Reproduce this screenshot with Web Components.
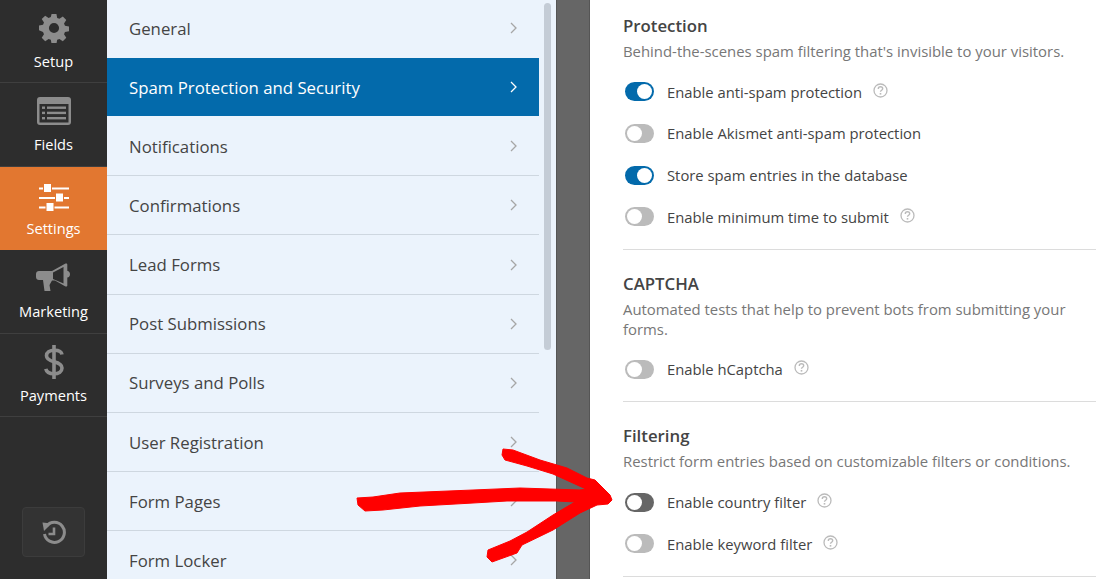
<!DOCTYPE html>
<html>
<head>
<meta charset="utf-8">
<style>
html, body { margin: 0; height: 100%; overflow: hidden; background: #fff; }
body { font-family: "Open Sans", "Noto Sans", sans-serif; }
</style>
</head>
<body>
<builder-app>
  <side-bar slot="side">
    <side-item label="Setup" icon="setup"></side-item>
    <side-item label="Fields" icon="fields"></side-item>
    <side-item label="Settings" icon="settings" active></side-item>
    <side-item label="Marketing" icon="marketing"></side-item>
    <side-item label="Payments" icon="payments"></side-item>
  </side-bar>
  <section-list slot="list">
    <section-row first>General</section-row>
    <section-row active>Spam Protection and Security</section-row>
    <section-row>Notifications</section-row>
    <section-row>Confirmations</section-row>
    <section-row>Lead Forms</section-row>
    <section-row>Post Submissions</section-row>
    <section-row>Surveys and Polls</section-row>
    <section-row>User Registration</section-row>
    <section-row>Form Pages</section-row>
    <section-row>Form Locker</section-row>
  </section-list>
  <settings-panel slot="panel">
    <settings-group heading="Protection" note="Behind-the-scenes spam filtering that's invisible to your visitors.">
      <toggle-row on help>Enable anti-spam protection</toggle-row>
      <toggle-row>Enable Akismet anti-spam protection</toggle-row>
      <toggle-row on>Store spam entries in the database</toggle-row>
      <toggle-row help>Enable minimum time to submit</toggle-row>
    </settings-group>
    <settings-group heading="CAPTCHA" note="Automated tests that help to prevent bots from submitting your forms.">
      <toggle-row help>Enable hCaptcha</toggle-row>
    </settings-group>
    <settings-group heading="Filtering" note="Restrict form entries based on customizable filters or conditions.">
      <toggle-row help dark>Enable country filter</toggle-row>
      <toggle-row help>Enable keyword filter</toggle-row>
    </settings-group>
  </settings-panel>
</builder-app>
<script>
const ICONS = {
  setup: `<svg width="30" height="30" viewBox="0 0 32 32"><path fill="#8c8c8c" fill-rule="evenodd" d="M13.400 1h5.200l.8 4.200 2.400 1 3.600-2.400 3.700 3.700-2.400 3.600 1 2.400 4.300.8v5.200l-4.300.8-1 2.400 2.400 3.600-3.700 3.700-3.600-2.400-2.400 1-.8 4.300h-5.200l-.8-4.300-2.400-1-3.600 2.400-3.700-3.700 2.400-3.600-1-2.400L0 18.500v-5.200l4.300-.8 1-2.400-2.400-3.600 3.700-3.700 3.600 2.400 2.400-1zM16 10.600a5.400 5.400 0 1 0 0 10.800 5.400 5.400 0 0 0 0-10.800z"/></svg>`,
  fields: `<svg width="34" height="28" viewBox="0 0 34 28"><rect width="34" height="28" rx="3" fill="#8c8c8c"/><rect x="2.500" y="7" width="29" height="18.500" fill="#2d2d2d"/><g fill="#8c8c8c"><rect x="5" y="9.500" width="3" height="2.400"/><rect x="5" y="14.700" width="3" height="2.400"/><rect x="5" y="20" width="3" height="2.400"/><rect x="10" y="9.500" width="19" height="2.400"/><rect x="10" y="14.700" width="19" height="2.400"/><rect x="10" y="20" width="19" height="2.400"/></g></svg>`,
  settings: `<svg class="sl" width="30" height="29" viewBox="0 0 30 29"><g fill="#fff"><rect y="4.500" width="30" height="2"/><rect y="14" width="30" height="2"/><rect y="23.500" width="30" height="2"/></g><g fill="#fff" stroke="#e27730"><rect x="4.500" y=".5" width="8" height="9"/><rect x="16.500" y="10" width="8" height="9"/><rect x="7" y="19.500" width="8" height="9"/></g></svg>`,
  marketing: `<svg width="35" height="30" viewBox="0 0 35 30"><path fill="#8c8c8c" fill-rule="evenodd" d="M3 8h13L29.500.6c1-.5 1.800 0 1.800 1v6.200c1.700.4 2.700 1.700 2.700 3.400s-1 3-2.700 3.400v7.800c0 1-.8 1.500-1.800 1L19 17.500h-3L13.500 22l1 6H8.500L7 17H3c-1.700 0-3-1.300-3-3v-3c0-1.700 1.300-3 3-3zm14 1.500V16l10.500 4.500V4z"/></svg>`,
  payments: `<svg width="20" height="34" viewBox="0 0 20 34"><path fill="none" stroke="#8c8c8c" stroke-width="3.600" d="M18 9.500C17.500 6.800 14.500 5.300 10.500 5.300 5.500 5.300 2.500 7.500 2.500 10.800c0 3.500 3 4.800 7.500 6 4.800 1.200 8 2.600 8 6.200 0 3.500-3.200 5.700-8 5.700-4.500 0-7.500-1.700-8.200-4.900"/><rect x="8.200" width="3.600" height="34" fill="#8c8c8c"/></svg>`,
  history: `<svg width="25" height="25" viewBox="0 0 25 25"><path fill="none" stroke="#8c8c8c" stroke-width="3" d="M5.500 6.200A10 10 0 1 1 3.500 14"/><path fill="#8c8c8c" d="M1.500 2.500l9 1-7.500 7.500z"/><path fill="none" stroke="#8c8c8c" stroke-width="2.600" d="M13 7.500v6.500H7.500"/></svg>`
};

class BuilderApp extends HTMLElement {
  constructor() {
    super();
    this.attachShadow({ mode: "open" }).innerHTML = `
<style>
:host { display: flex; height: 579px; width: 1116px; position: relative; overflow: hidden; }
.gutter { width: 34px; background: #666; border-left: 1px solid #555; border-right: 1px solid #555; box-sizing: border-box; flex: none; }
svg { position: absolute; left: 0; top: 0; pointer-events: none; }
</style>
<slot name="side"></slot>
<slot name="list"></slot>
<div class="gutter"></div>
<slot name="panel"></slot>
<svg width="1116" height="579" viewBox="0 0 1116 579">
  <!-- hand drawn arrow, page coordinates -->
  <path fill="#f00" stroke="#f00" stroke-linejoin="round" d="M503 449 513 450 540 460 567 468 587 478 595 480 610 495 612 500 608 504 597 505 580 513 553 530 522 545 517 553 492 562 487 557 488 550 510 541 527 532 553 515 575 502 557 501 507 501 473 503 420 506 383 510 365 511 358 505 357 498 373 497 400 493 473 490 520 488 580 490 586 489 575 484 553 474 527 466 505 460 502 455z"/>
</svg>`;
  }
}
customElements.define("builder-app", BuilderApp);

class SideBar extends HTMLElement {
  constructor() {
    super();
    this.attachShadow({ mode: "open" }).innerHTML = `
<style>
:host { display: flex; flex-direction: column; width: 107px; flex: none; height: 579px; background: #2d2d2d; box-sizing: border-box; }
.grow { flex: 1; display: flex; align-items: flex-end; justify-content: center; padding-bottom: 22px; }
.hist { width: 61px; height: 48px; border: 1px solid #3c3c3c; border-radius: 4px; background: #333; display: flex; align-items: center; justify-content: center; }
</style>
<slot></slot>
<div class="grow"><div class="hist">${ICONS.history}</div></div>`;
  }
}
customElements.define("side-bar", SideBar);

class SideItem extends HTMLElement {
  constructor() {
    super();
    const icon = ICONS[this.getAttribute("icon")];
    this.attachShadow({ mode: "open" }).innerHTML = `
<style>
:host { display: flex; flex-direction: column; align-items: center; box-sizing: border-box; height: 83.400px; border-bottom: 1px solid #3f3f3f; color: #fff; font-size: 14.600px; }
:host([active]) { background: #e27730; border-bottom-color: #e27730; }
.ic { height: 50px; flex: none; display: flex; align-items: center; justify-content: center; padding-top: 6px; box-sizing: border-box; }
.lb { line-height: 20px; margin-top: 1px; }
.sl { margin-top: 6px; }
</style>
<div class="ic">${icon}</div><div class="lb">${this.getAttribute("label")}</div>`;
  }
}
customElements.define("side-item", SideItem);

class SectionList extends HTMLElement {
  constructor() {
    super();
    this.attachShadow({ mode: "open" }).innerHTML = `
<style>
:host { display: block; position: relative; width: 449px; flex: none; height: 579px; overflow: hidden; background: #ebf3fc; box-sizing: border-box; padding-right: 17px; }
.thumb { position: absolute; right: 5px; top: 3px; width: 7px; height: 347px; border-radius: 4px; background: #c4ccd6; }
</style>
<slot></slot>
<div class="thumb"></div>`;
  }
}
customElements.define("section-list", SectionList);

class SectionRow extends HTMLElement {
  constructor() {
    super();
    this.attachShadow({ mode: "open" }).innerHTML = `
<style>
:host { display: flex; align-items: center; justify-content: space-between; box-sizing: border-box; height: 59.170px; padding: 0 22px 0 22px; border-bottom: 1px solid #ced7e0; color: #444; font-size: 16.800px; }
:host([first]) { padding-bottom: 2px; }
:host([active]) { background: #036aab; color: #fff; border-bottom-color: #036aab; margin-top: -1px; height: 58px; margin-bottom: 1px; padding-top: 1px; }
svg { stroke: #a6a6a6; }
:host([active]) svg { stroke: #fff; stroke-width: 2; }
</style>
<slot></slot>
<svg width="7" height="12" viewBox="0 0 7 12"><path fill="none" stroke-width="1.300" d="M1 1l5 5-5 5"/></svg>`;
  }
}
customElements.define("section-row", SectionRow);

class SettingsPanel extends HTMLElement {
  constructor() {
    super();
    this.attachShadow({ mode: "open" }).innerHTML = `
<style>
:host { display: block; flex: 1; box-sizing: border-box; padding: 14px 20px 0 33px; background: #fff; }
</style>
<slot></slot>`;
  }
}
customElements.define("settings-panel", SettingsPanel);

class SettingsGroup extends HTMLElement {
  constructor() {
    super();
    this.attachShadow({ mode: "open" }).innerHTML = `
<style>
:host { display: block; border-bottom: 1px solid #dcdcdc; padding-bottom: 11px; margin-bottom: 22px; }
h3 { margin: 0 0 4px; font-size: 16.800px; font-weight: 600; line-height: 23px; color: #444; }
p { margin: 0 0 10px; font-size: 14.900px; line-height: 20px; color: #777; }
</style>
<h3>${this.getAttribute("heading")}</h3>
<p>${this.getAttribute("note")}</p>
<slot></slot>`;
  }
}
customElements.define("settings-group", SettingsGroup);

class ToggleRow extends HTMLElement {
  constructor() {
    super();
    const help = this.hasAttribute("help")
      ? `<svg class="help" width="15" height="15" viewBox="0 0 15 15"><circle cx="7.500" cy="7.500" r="6.500" fill="none" stroke="#bbb" stroke-width="1.300"/><path fill="none" stroke="#bbb" stroke-width="1.400" d="M5.300 5.900c0-1.300 1-2.100 2.200-2.100s2.200.8 2.200 1.900c0 1.500-2.200 1.600-2.200 3.100"/><rect x="6.700" y="10" width="1.600" height="1.600" fill="#bbb"/></svg>`
      : "";
    this.attachShadow({ mode: "open" }).innerHTML = `
<style>
:host { display: flex; align-items: center; height: 41.670px; color: #444; font-size: 14.800px; }
.sw { width: 29px; height: 19px; border-radius: 10px; background: #bbb; position: relative; margin: 0 13px 0 2px; flex: none; }
.sw::after { content: ""; position: absolute; left: 2px; top: 2px; width: 15px; height: 15px; border-radius: 50%; background: #fff; }
:host([on]) .sw { background: #036aab; }
:host([on]) .sw::after { left: 12px; }
:host([dark]) .sw { background: #666; }
.help { margin: -3px 0 0 11px; flex: none; }
</style>
<span class="sw"></span><span><slot></slot></span>${help}`;
  }
}
customElements.define("toggle-row", ToggleRow);
</script>
</body>
</html>
